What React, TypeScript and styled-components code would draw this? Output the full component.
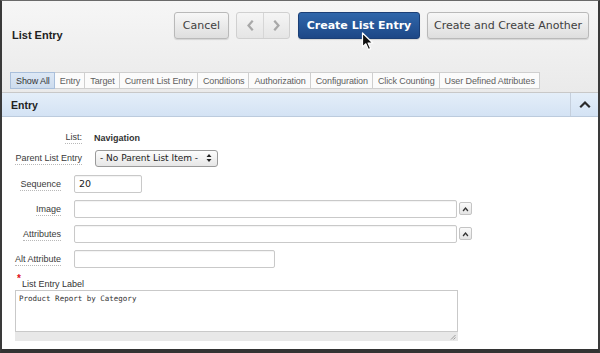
import React from "react";
import styled, { createGlobalStyle } from "styled-components";

const GlobalStyle = createGlobalStyle`
    * {
        box-sizing: border-box;
    }
    body {
        margin: 0;
        background: #ffffff;
        font-family: "Liberation Sans", Arial, sans-serif;
    }
`;

const Frame = styled.div`
    position: relative;
    width: 600px;
    height: 353px;
    display: flex;
    flex-direction: column;
    border-top: 1px solid #6a6a6a;
    border-left: 2px solid #3a3a3a;
    border-right: 2px solid #3a3a3a;
    border-bottom: 4px solid #333333;
    overflow: hidden;
`;

const Header = styled.div`
    background: linear-gradient(#f6f6f6, #eaeaea);
    padding: 11px 9px 0 10px;
    height: 91px;
    display: flex;
    flex-direction: column;
`;

const TopRow = styled.div`
    display: flex;
    align-items: flex-start;
`;

const Title = styled.h1`
    margin: 0;
    padding-top: 17px;
    font-size: 11px;
    font-weight: bold;
    color: #222;
    flex: 1;
    line-height: 13px;
`;

const ButtonBar = styled.div`
    display: flex;
    gap: 7px;
`;

const Button = styled.button<{ $w: number; $hot?: boolean }>`
    width: ${p => p.$w}px;
    height: 27px;
    padding: 0;
    border-radius: 3px;
    font-family: "DejaVu Sans", sans-serif;
    font-size: 11px;
    font-weight: ${p => (p.$hot ? "bold" : "normal")};
    color: ${p => (p.$hot ? "#ffffff" : "#404040")};
    border: 1px solid ${p => (p.$hot ? "#1b3f76" : "#b9b9b9")};
    background: ${p =>
        p.$hot ? "linear-gradient(#3067ab, #1d4786)" : "linear-gradient(#f7f7f7, #dedede)"};
    box-shadow: 0 1px 1px rgba(0, 0, 0, 0.12);
`;

const NavGroup = styled.div`
    display: flex;
    margin-right: 1px;
    border: 1px solid #d0d0d0;
    border-radius: 3px;
    background: linear-gradient(#f5f5f5, #e5e5e5);
    height: 27px;
`;

const NavButton = styled.span<{ $first?: boolean }>`
    width: 26px;
    display: flex;
    align-items: center;
    justify-content: center;
    border-left: ${p => (p.$first ? "none" : "1px solid #d6d6d6")};
`;

const TabBar = styled.div`
    display: flex;
    margin-top: 30px;
    margin-left: -2px;
`;

const Tab = styled.span<{ $active?: boolean }>`
    height: 17px;
    padding: 0 4px 0 5px;
    margin-right: -1px;
    display: flex;
    align-items: center;
    font-size: 9px;
    letter-spacing: -0.1px;
    color: ${p => (p.$active ? "#333" : "#606060")};
    border: 1px solid ${p => (p.$active ? "#a9bfdb" : "#cfcfcf")};
    background: ${p => (p.$active ? "linear-gradient(#dde8f5, #cddcee)" : "#fbfbfb")};
    position: relative;
    z-index: ${p => (p.$active ? 1 : 0)};
`;

const RegionHead = styled.div`
    display: flex;
    align-items: stretch;
    height: 25px;
    border-top: 1px solid #c8c8c8;
    border-bottom: 1px solid #bccbdd;
    background: linear-gradient(#e4eef9, #d4e3f4);
`;

const RegionTitle = styled.h2`
    flex: 1;
    margin: 0;
    padding-left: 9px;
    display: flex;
    align-items: center;
    font-size: 10.5px;
    font-weight: bold;
    color: #222;
`;

const Collapse = styled.span`
    width: 28px;
    display: flex;
    align-items: center;
    justify-content: center;
    border-left: 1px solid #c5cfdc;
`;

const Body = styled.div`
    flex: 1;
    background: #fff;
    padding-top: 10px;
`;

const FieldGroup = styled.div<{ $label: number; $gap: number; $mt?: number }>`
    display: grid;
    grid-template-columns: ${p => p.$label}px 1fr;
    column-gap: ${p => p.$gap}px;
    margin-top: ${p => p.$mt || 0}px;
`;

const Row = styled.div<{ $h: number }>`
    display: contents;
    & > * {
        height: ${p => p.$h}px;
    }
`;

const LabelCell = styled.div`
    display: flex;
    align-items: center;
    justify-content: flex-end;
`;

const Label = styled.span`
    font-size: 9px;
    color: #3a3a3a;
    border-bottom: 1px dotted #b8b8b8;
    line-height: 11px;
    margin-top: 2px;
`;

const FieldCell = styled.div`
    display: flex;
    align-items: center;
    gap: 2px;
`;

const Value = styled.span`
    font-size: 9px;
    font-weight: bold;
    color: #333;
    margin-top: 1px;
`;

const Select = styled.div`
    margin-left: 1px;
    width: 123px;
    height: 17px;
    border: 1px solid #9a9a9a;
    border-radius: 3px;
    background: linear-gradient(#fdfdfd, #e6e6e6);
    display: flex;
    align-items: center;
    justify-content: space-between;
    padding: 0 5px 0 4px;
    font-family: "DejaVu Sans", sans-serif;
    font-size: 9px;
    color: #222;
`;

const Input = styled.div<{ $w: number }>`
    width: ${p => p.$w}px;
    height: 18px;
    border: 1px solid #c9c9c9;
    border-radius: 2px;
    background: #fff;
    box-shadow: inset 0 1px 1px rgba(0, 0, 0, 0.05);
    display: flex;
    align-items: center;
    padding-left: 4px;
    font-family: "DejaVu Sans", sans-serif;
    font-size: 9.5px;
    color: #222;
`;

const MiniButton = styled.span`
    width: 13px;
    height: 13px;
    border: 1px solid #c4c4c4;
    border-radius: 2px;
    background: linear-gradient(#fafafa, #e4e4e4);
    display: flex;
    align-items: center;
    justify-content: center;
`;

const TextBlock = styled.div`
    padding-left: 13px;
    margin-top: 3px;
`;

const TextLabel = styled.div`
    display: flex;
    align-items: flex-start;
    height: 16px;
    font-size: 9px;
    color: #333;
`;

const Required = styled.span`
    color: #e0101a;
    font-size: 10px;
    font-weight: bold;
    margin: 0 1px 0 2px;
    line-height: 9px;
`;

const LabelText = styled.span`
    padding-top: 5px;
`;

const TextArea = styled.div`
    width: 443px;
    height: 42px;
    border: 1px solid #c9c9c9;
    padding: 3px 3px;
    font-family: "DejaVu Sans Mono", monospace;
    font-size: 7.5px;
    color: #333;
`;

const ResizeBar = styled.div`
    width: 443px;
    height: 9px;
    background: #e8e8e8;
    display: flex;
    justify-content: flex-end;
    align-items: flex-end;
    padding: 0 2px 1px 0;
`;

const Cursor = styled.svg`
    position: absolute;
    left: 359px;
    top: 31px;
`;

const Chevron: React.FC<{ d: string; color: string; w: number; h: number; sw: number }> = ({
    d,
    color,
    w,
    h,
    sw,
}) => (
    <svg width={w} height={h} viewBox={`0 0 ${w} ${h}`}>
        <path d={d} fill="none" stroke={color} strokeWidth={sw} strokeLinecap="square" />
    </svg>
);

const tabs = [
    "Show All",
    "Entry",
    "Target",
    "Current List Entry",
    "Conditions",
    "Authorization",
    "Configuration",
    "Click Counting",
    "User Defined Attributes",
];

const MiniUp = () => (
    <MiniButton>
        <Chevron d="M1.5 4.5 L3.5 2 L5.5 4.5" color="#333" w={7} h={6} sw={1.3} />
    </MiniButton>
);

export default function App() {
    return (
        <>
            <GlobalStyle />
            <Frame>
                <Header>
                    <TopRow>
                        <Title>List Entry</Title>
                        <ButtonBar>
                            <Button type="button" $w={55}>
                                Cancel
                            </Button>
                            <NavGroup>
                                <NavButton $first>
                                    <Chevron d="M6 1.5 L2.5 5.5 L6 9.5" color="#a8a8a8" w={9} h={11} sw={2.2} />
                                </NavButton>
                                <NavButton>
                                    <Chevron d="M3 1.5 L6.5 5.5 L3 9.5" color="#a8a8a8" w={9} h={11} sw={2.2} />
                                </NavButton>
                            </NavGroup>
                            <Button type="button" $w={122} $hot>
                                Create List Entry
                            </Button>
                            <Button type="button" $w={162}>
                                Create and Create Another
                            </Button>
                        </ButtonBar>
                    </TopRow>
                    <TabBar>
                        {tabs.map((t, i) => (
                            <Tab key={t} $active={i === 0}>
                                {t}
                            </Tab>
                        ))}
                    </TabBar>
                </Header>
                <RegionHead>
                    <RegionTitle>Entry</RegionTitle>
                    <Collapse>
                        <Chevron d="M2 6.5 L6 2.5 L10 6.5" color="#2a2a2a" w={12} h={9} sw={2.2} />
                    </Collapse>
                </RegionHead>
                <Body>
                    <FieldGroup $label={80} $gap={12}>
                        <Row $h={20}>
                            <LabelCell>
                                <Label>List:</Label>
                            </LabelCell>
                            <FieldCell>
                                <Value>Navigation</Value>
                            </FieldCell>
                        </Row>
                        <Row $h={22}>
                            <LabelCell>
                                <Label>Parent List Entry</Label>
                            </LabelCell>
                            <FieldCell>
                                <Select>
                                    <span>- No Parent List Item -</span>
                                    <svg width="6" height="10" viewBox="0 0 6 10">
                                        <path d="M0.5 4 L3 1 L5.5 4 Z M0.5 6 L3 9 L5.5 6 Z" fill="#222" />
                                    </svg>
                                </Select>
                            </FieldCell>
                        </Row>
                    </FieldGroup>
                    <FieldGroup $label={59} $gap={13} $mt={2}>
                        <Row $h={25}>
                            <LabelCell>
                                <Label>Sequence</Label>
                            </LabelCell>
                            <FieldCell>
                                <Input $w={68}>20</Input>
                            </FieldCell>
                        </Row>
                        <Row $h={25}>
                            <LabelCell>
                                <Label>Image</Label>
                            </LabelCell>
                            <FieldCell>
                                <Input $w={383} />
                                <MiniUp />
                            </FieldCell>
                        </Row>
                        <Row $h={25}>
                            <LabelCell>
                                <Label>Attributes</Label>
                            </LabelCell>
                            <FieldCell>
                                <Input $w={383} />
                                <MiniUp />
                            </FieldCell>
                        </Row>
                        <Row $h={25}>
                            <LabelCell>
                                <Label>Alt Attribute</Label>
                            </LabelCell>
                            <FieldCell>
                                <Input $w={201} />
                            </FieldCell>
                        </Row>
                    </FieldGroup>
                    <TextBlock>
                        <TextLabel>
                            <Required>*</Required>
                            <LabelText>List Entry Label</LabelText>
                        </TextLabel>
                        <TextArea>Product Report by Category</TextArea>
                        <ResizeBar>
                            <svg width="6" height="6" viewBox="0 0 6 6">
                                <path d="M5.5 1 L1 5.5 M5.5 3.5 L3.5 5.5" stroke="#888" strokeWidth="0.8" />
                            </svg>
                        </ResizeBar>
                    </TextBlock>
                </Body>
                <Cursor width="14" height="19" viewBox="0 0 14 19">
                    <path
                        d="M1.5 1 L1.5 15 L4.8 11.8 L7.4 17.6 L9.6 16.6 L7.1 11 L11.8 11 Z"
                        fill="#111"
                        stroke="#fff"
                        strokeWidth="1.2"
                        strokeLinejoin="round"
                    />
                </Cursor>
            </Frame>
        </>
    );
}
